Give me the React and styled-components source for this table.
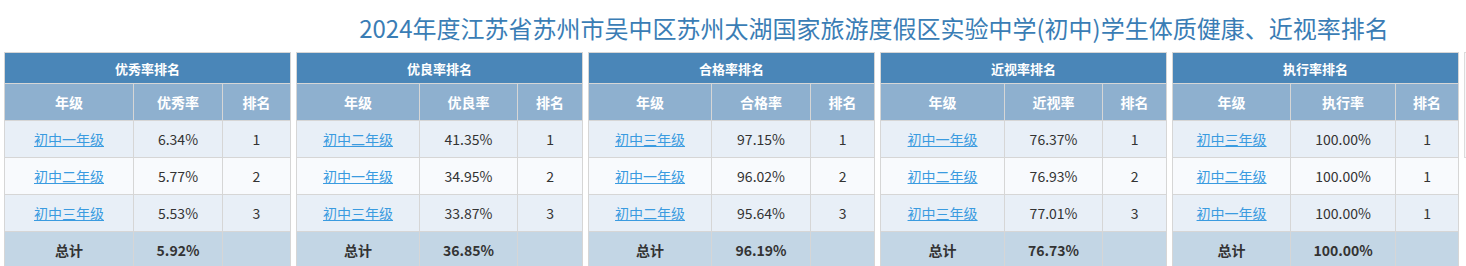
import React from 'react'
import styled, { createGlobalStyle } from 'styled-components'

const GlobalStyle = createGlobalStyle`
  html, body {
    margin: 0;
    padding: 0;
    background: #fff;
    font-family: "Noto Sans CJK SC", "Microsoft YaHei", sans-serif;
    overflow: hidden;
  }
`

const Page = styled.div`
  width: 1466px;
  height: 266px;
  overflow: hidden;
`

const Title = styled.h1`
  margin: 0;
  height: 52px;
  padding: 12px 0 0 282px;
  box-sizing: border-box;
  text-align: center;
  font-size: 24px;
  font-weight: 400;
  line-height: 32px;
  color: #3a7db5;
  white-space: nowrap;
`

const Boards = styled.div`
  display: flex;
  gap: 5px;
  padding-left: 4px;
`

const Board = styled.table`
  flex: 0 0 286px;
  width: 286px;
  border-collapse: collapse;
  table-layout: fixed;
  font-size: 14px;
  color: #333;
`

const Caption = styled.th`
  height: 30px;
  background: #4a86b8;
  color: #fff;
  font-size: 13px;
  font-weight: 700;
  border: 1px solid #d6d6d6;
  padding: 0;
`

const HeadCell = styled.th`
  height: 36px;
  background: #8eb0cf;
  color: #fff;
  font-size: 14px;
  font-weight: 700;
  border: 1px solid #d6d6d6;
  padding: 0;
`

const Row = styled.tr`
  background: ${(p) => (p.$alt ? '#f8fafd' : '#e8eff7')};
`

const Cell = styled.td`
  height: 36px;
  text-align: center;
  border: 1px solid #d6d6d6;
  padding: 0;
`

const GradeLink = styled.a`
  color: #3a9be0;
  text-decoration: underline;
  cursor: pointer;
`

const TotalRow = styled.tr`
  background: #c3d6e5;
  font-weight: 700;
`

const Stub = styled.div`
  flex: 0 0 40px;
  height: 104px;
  border: 1px solid #dcdcdc;
  background: #f7f8fa;
`

const boards = [
  {
    name: '优秀率排名',
    label: '优秀率',
    cols: [129, 89, 68],
    rows: [
      ['初中一年级', '6.34%', 1],
      ['初中二年级', '5.77%', 2],
      ['初中三年级', '5.53%', 3],
    ],
    total: '5.92%',
  },
  {
    name: '优良率排名',
    label: '优良率',
    cols: [123, 98, 65],
    rows: [
      ['初中二年级', '41.35%', 1],
      ['初中一年级', '34.95%', 2],
      ['初中三年级', '33.87%', 3],
    ],
    total: '36.85%',
  },
  {
    name: '合格率排名',
    label: '合格率',
    cols: [123, 99, 64],
    rows: [
      ['初中三年级', '97.15%', 1],
      ['初中一年级', '96.02%', 2],
      ['初中二年级', '95.64%', 3],
    ],
    total: '96.19%',
  },
  {
    name: '近视率排名',
    label: '近视率',
    cols: [124, 98, 64],
    rows: [
      ['初中一年级', '76.37%', 1],
      ['初中二年级', '76.93%', 2],
      ['初中三年级', '77.01%', 3],
    ],
    total: '76.73%',
  },
  {
    name: '执行率排名',
    label: '执行率',
    cols: [118, 105, 63],
    rows: [
      ['初中三年级', '100.00%', 1],
      ['初中二年级', '100.00%', 1],
      ['初中一年级', '100.00%', 1],
    ],
    total: '100.00%',
  },
]

function RankBoard({ board }) {
  return (
    <Board>
      <colgroup>
        {board.cols.map((w, i) => (
          <col key={i} style={{ width: w }} />
        ))}
      </colgroup>
      <thead>
        <tr>
          <Caption colSpan={3}>{board.name}</Caption>
        </tr>
        <tr>
          <HeadCell>年级</HeadCell>
          <HeadCell>{board.label}</HeadCell>
          <HeadCell>排名</HeadCell>
        </tr>
      </thead>
      <tbody>
        {board.rows.map((r, i) => (
          <Row key={i} $alt={i % 2 === 1}>
            <Cell>
              <GradeLink>{r[0]}</GradeLink>
            </Cell>
            <Cell>{r[1]}</Cell>
            <Cell>{r[2]}</Cell>
          </Row>
        ))}
        <TotalRow>
          <Cell>总计</Cell>
          <Cell>{board.total}</Cell>
          <Cell></Cell>
        </TotalRow>
      </tbody>
    </Board>
  )
}

export default function App() {
  return (
    <Page>
      <GlobalStyle />
      <Title>2024年度江苏省苏州市吴中区苏州太湖国家旅游度假区实验中学(初中)学生体质健康、近视率排名</Title>
      <Boards>
        {boards.map((b) => (
          <RankBoard key={b.name} board={b} />
        ))}
        <Stub />
      </Boards>
    </Page>
  )
}
